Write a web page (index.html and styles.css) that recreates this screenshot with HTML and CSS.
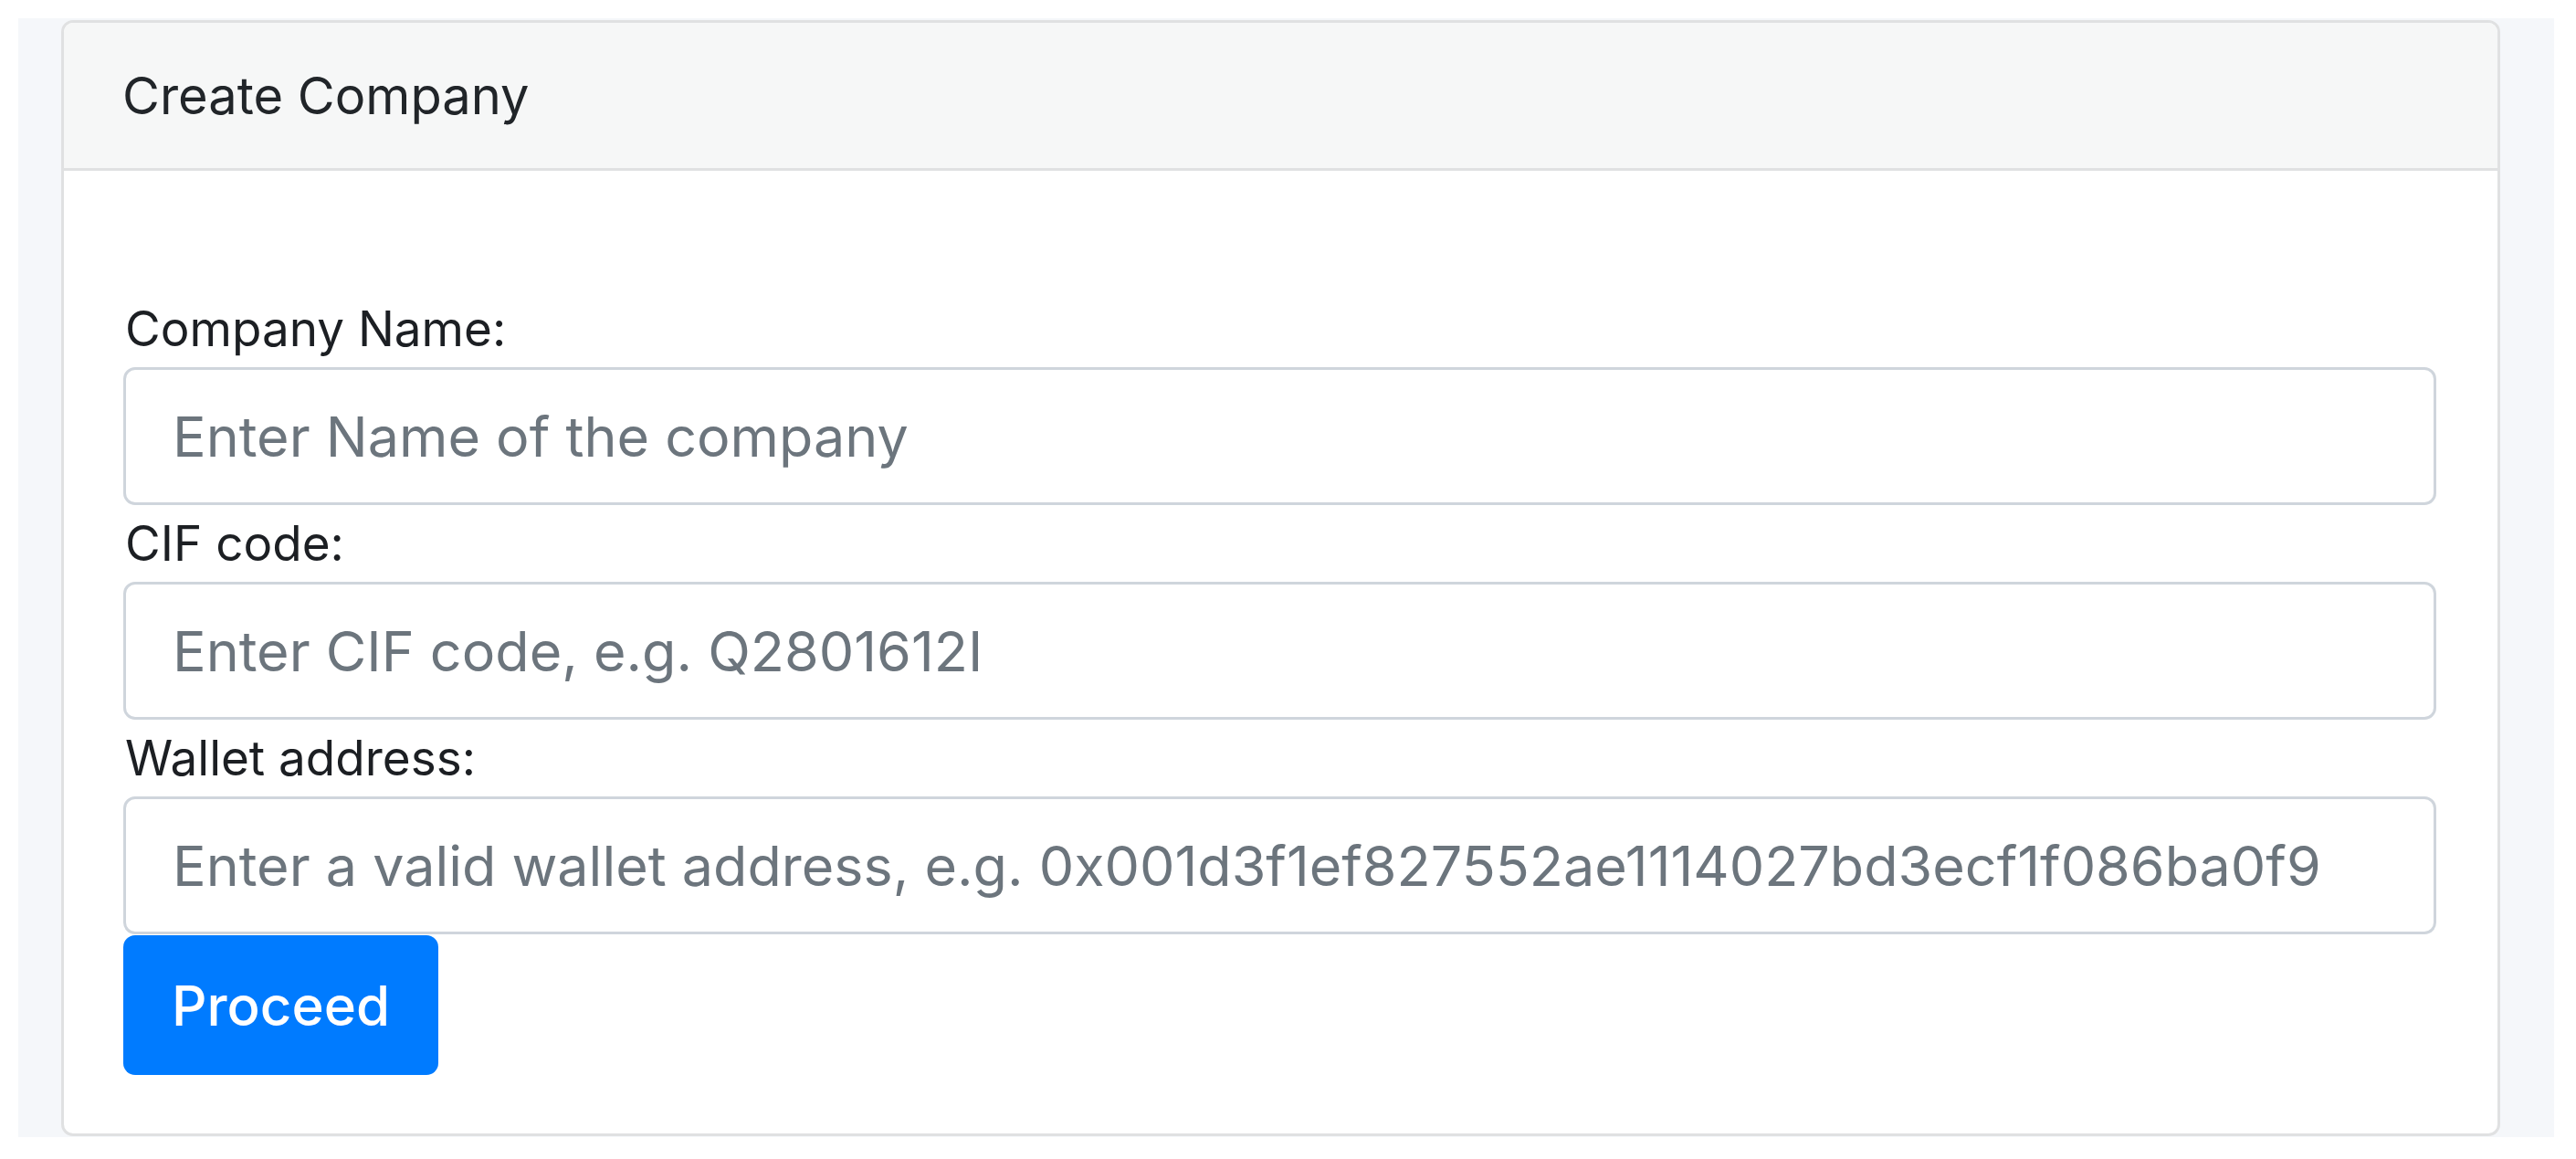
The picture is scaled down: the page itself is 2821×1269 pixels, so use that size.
FILE: index.html
```html
<!DOCTYPE html>
<html lang="en">
<head>
<meta charset="utf-8">
<title>Create Company</title>
<link rel="stylesheet" href="styles.css">
</head>
<body>
<div class="page">
  <div class="card">
    <div class="card-header">Create Company</div>
    <div class="card-body">
      <form class="form">
        <label class="label" for="name">Company Name:</label>
        <input class="input" id="name" type="text" placeholder="Enter Name of the company">
        <label class="label" for="cif">CIF code:</label>
        <input class="input" id="cif" type="text" placeholder="Enter CIF code, e.g. Q2801612I">
        <label class="label" for="wallet">Wallet address:</label>
        <input class="input" id="wallet" type="text" placeholder="Enter a valid wallet address, e.g. 0x001d3f1ef827552ae1114027bd3ecf1f086ba0f9">
        <button class="btn" type="button">Proceed</button>
      </form>
    </div>
  </div>
</div>
</body>
</html>
```

FILE: styles.css
```css
* {
  box-sizing: border-box;
}

html, body {
  margin: 0;
  padding: 0;
  background: #ffffff;
}

body {
  font-family: Inter, "Liberation Sans", sans-serif;
  color: #212529;
}

.page {
  margin: 20px 24px 0 20px;
  padding: 2px 59px 1px 47px;
  background: #f5f7fa;
}

.card {
  background: #ffffff;
  border: 3px solid #e0e1e2;
  border-radius: 13px;
  overflow: hidden;
}

.card-header {
  height: 162px;
  display: flex;
  align-items: center;
  padding: 0 64px;
  background: #f6f7f7;
  border-bottom: 3px solid #e0e1e2;
  font-size: 56px;
  line-height: 84px;
  color: #212529;
}

.card-body {
  padding: 131px 67px 64px 65px;
}

.form {
  display: flex;
  flex-direction: column;
  align-items: stretch;
}

.label {
  display: block;
  font-size: 53px;
  line-height: 84px;
  color: #1c1f23;
  padding-left: 2px;
}

.input {
  display: block;
  width: 100%;
  height: 151px;
  border: 3px solid #cfd5dc;
  border-radius: 13px;
  padding: 0 51px;
  font-family: Inter, "Liberation Sans", sans-serif;
  font-size: 61px;
  color: #495057;
  background: #ffffff;
  outline: none;
}

.input::placeholder {
  color: #6c757d;
  opacity: 1;
}

.btn {
  align-self: flex-start;
  width: 345px;
  height: 153px;
  margin-top: 1px;
  border: none;
  border-radius: 13px;
  background: #007bff;
  color: #ffffff;
  font-family: Inter, "Liberation Sans", sans-serif;
  font-size: 60px;
  font-weight: 500;
  cursor: pointer;
}
```
